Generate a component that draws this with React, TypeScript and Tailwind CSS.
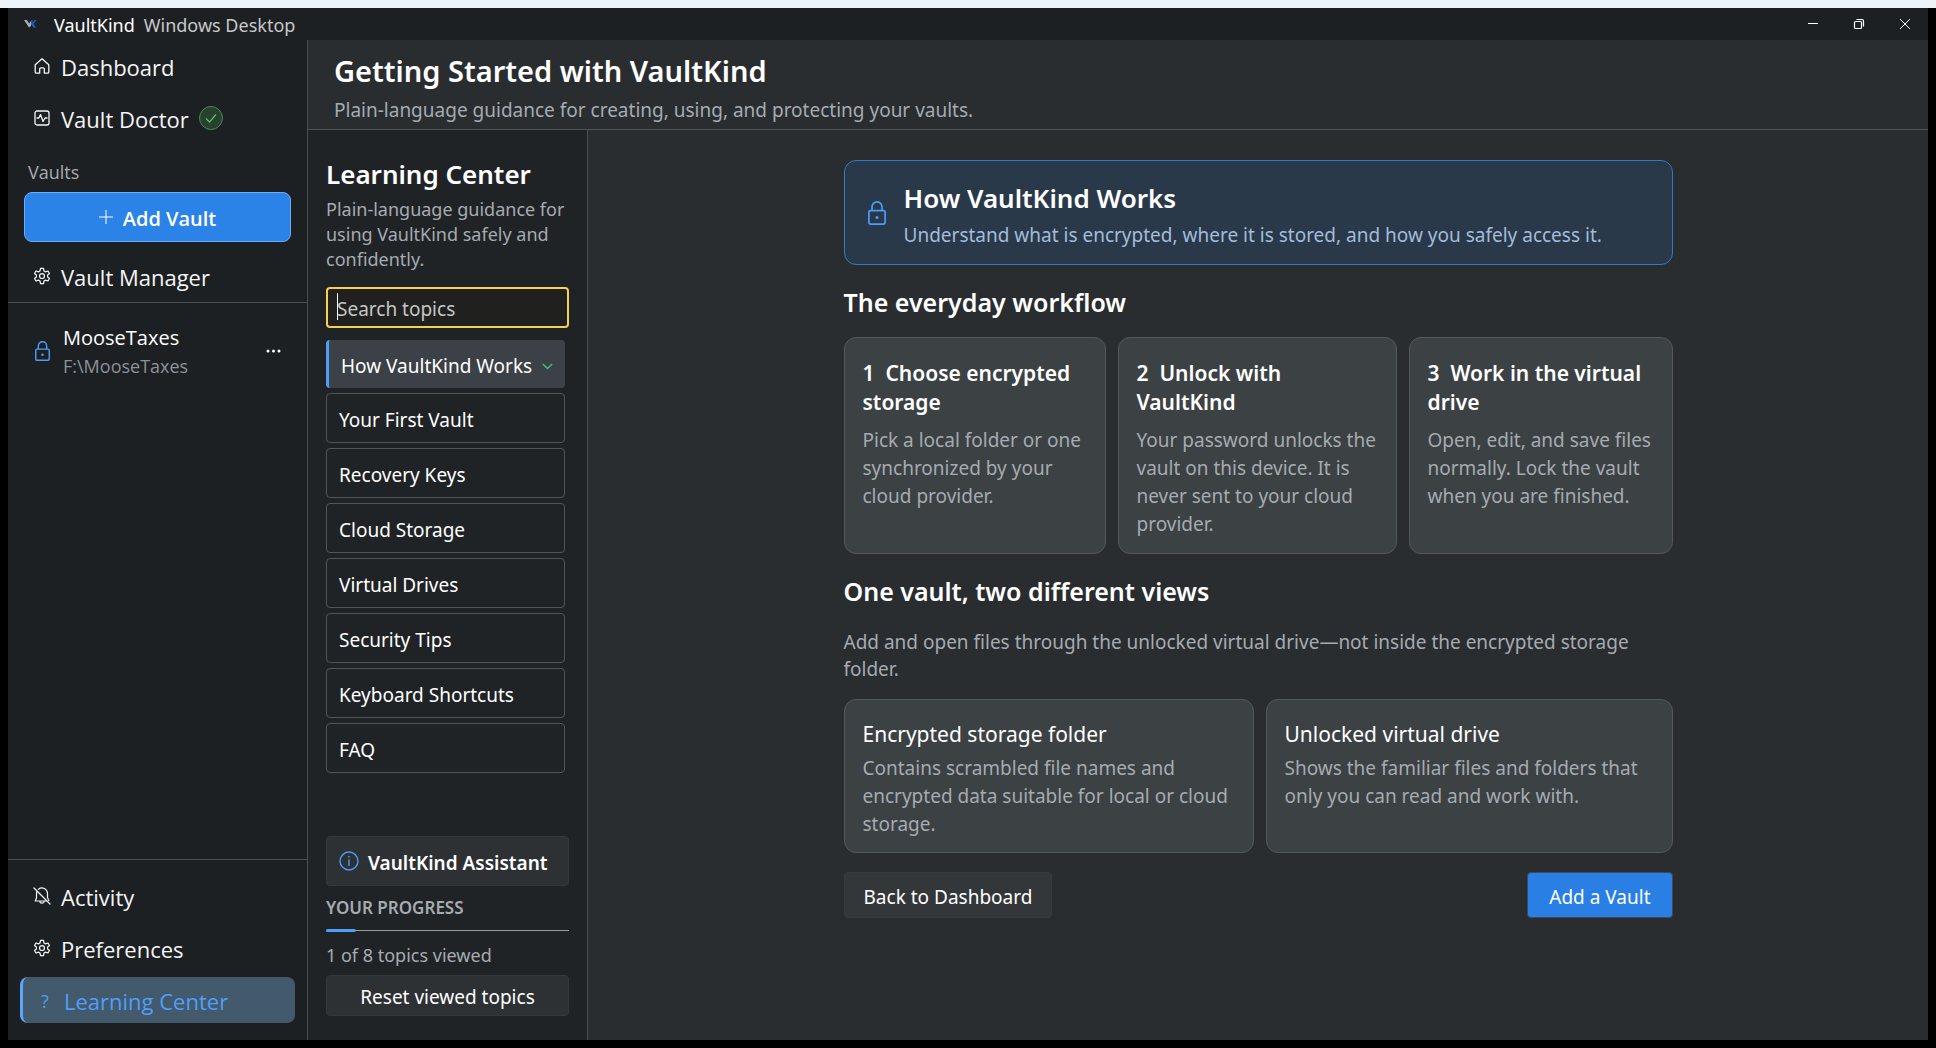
import { useState } from "react";
import { clsx } from "clsx";

const topics = [
    "How VaultKind Works",
    "Your First Vault",
    "Recovery Keys",
    "Cloud Storage",
    "Virtual Drives",
    "Security Tips",
    "Keyboard Shortcuts",
    "FAQ"
];

const steps = [
    {
        title: "Choose encrypted storage",
        text: "Pick a local folder or one synchronized by your cloud provider.",
        size: "basis-[262px]"
    },
    {
        title: "Unlock with VaultKind",
        text: "Your password unlocks the vault on this device. It is never sent to your cloud provider.",
        size: "basis-[279px]"
    },
    {
        title: "Work in the virtual drive",
        text: "Open, edit, and save files normally. Lock the vault when you are finished.",
        size: "basis-[264px]"
    }
];

const views = [
    {
        title: "Encrypted storage folder",
        text: "Contains scrambled file names and encrypted data suitable for local or cloud storage.",
        size: "basis-[410px]"
    },
    {
        title: "Unlocked virtual drive",
        text: "Shows the familiar files and folders that only you can read and work with.",
        size: "basis-[407px]"
    }
];

type IconProps = { className?: string };

function LogoIcon() {
    return (
        <svg className="size-4" viewBox="0 0 16 16" aria-hidden="true">
            <path d="M1 4h3l2 3.500L8 5v5L6 11.500Z" fill="#a9adb2" />
            <path d="M8 4.500 9.500 4v3L11.500 4h2l-3 3.800 2.500 4h-2L8 8.500Z" fill="#1b61c4" />
        </svg>
    );
}

function HomeIcon() {
    return (
        <svg className="size-4" viewBox="0 0 16 16" fill="none" stroke="currentColor" strokeWidth="1.300" strokeLinejoin="round" aria-hidden="true">
            <path d="M1.200 6.800 8 .8l6.800 6V14a1.200 1.200 0 0 1-1.200 1.200H10.300V11a1.200 1.200 0 0 0-1.200-1.200H6.900A1.200 1.200 0 0 0 5.700 11v4.200H2.400A1.200 1.200 0 0 1 1.200 14Z" />
        </svg>
    );
}

function DoctorIcon() {
    return (
        <svg className="size-4" viewBox="0 0 16 16" fill="none" stroke="currentColor" strokeWidth="1.300" strokeLinejoin="round" strokeLinecap="round" aria-hidden="true">
            <rect x="1" y="1" width="14" height="14" rx="2" />
            <path d="M3 8h1.800L6.500 4.500l2.500 7L11 8h2" />
        </svg>
    );
}

function GearIcon() {
    return (
        <svg className="size-[18px]" viewBox="0 0 24 24" fill="none" stroke="currentColor" strokeWidth="1.600" strokeLinejoin="round" aria-hidden="true">
            <path d="M10 1.800h4l.6 3.400 2.200 1.300 3.200-1.200 2 3.400-2.500 2v2.600l2.500 2-2 3.400-3.200-1.200-2.200 1.300-.6 3.400h-4l-.6-3.400-2.200-1.300-3.200 1.200-2-3.400 2.500-2v-2.600l-2.500-2 2-3.400 3.200 1.200 2.200-1.300Z" />
            <circle cx="12" cy="12" r="3.300" />
        </svg>
    );
}

function LockIcon({ className }: IconProps) {
    return (
        <svg className={className} viewBox="0 0 18 24" fill="none" stroke="currentColor" strokeWidth="1.700" aria-hidden="true">
            <rect x=".9" y="9.700" width="16.200" height="13.400" rx="1.500" />
            <path d="M4 9.700V5.900a5 5 0 0 1 10 0v3.800" />
            <circle cx="9" cy="16.400" r="1.500" fill="currentColor" stroke="none" />
        </svg>
    );
}

function BellOffIcon() {
    return (
        <svg className="size-[18px]" viewBox="0 0 18 18" fill="none" stroke="currentColor" strokeWidth="1.200" strokeLinejoin="round" strokeLinecap="round" aria-hidden="true">
            <path d="M1 1l16 16M5.500 2.300A5.500 5.500 0 0 1 14.500 6.500v4l1.300 3M13.500 14H2.200L3.500 11V6.500c0-1 .2-1.700.5-2.400M6.800 14a2.200 2.200 0 0 0 4.400 0" />
        </svg>
    );
}

function NavItem({ icon, label, children }: { icon: React.ReactNode; label: string; children?: React.ReactNode }) {
    return (
        <a href="#" className="flex h-[52px] items-center gap-[10px] pl-[25px] text-[22px] text-[#f4f5f6]">
            <span className="flex w-[18px] shrink-0 items-center justify-center">{icon}</span>
            <span className="pt-[2px]">{label}</span>
            {children}
        </a>
    );
}

function InfoCard({ title, text, size, number }: { title: string; text: string; size: string; number?: number }) {
    return (
        <section
            className={clsx(
                "flex-auto rounded-[12px] border border-[#53585c] bg-[#3c4144] pl-[18px] pr-[16px]",
                number ? "pt-[21px] pb-[15px]" : "pt-[20px] pb-[14px]",
                size
            )}
        >
            <h3 className={clsx("text-[21px] leading-[29px] text-white", number && "font-semibold")}>
                {number ? `${number}\u00a0\u00a0${title}` : title}
            </h3>
            <p className={clsx("text-[19px] leading-[28px] text-[#a5abb1]", number ? "mt-[9px]" : "mt-[5px]")}>{text}</p>
        </section>
    );
}

export default function App() {
    const [active, setActive] = useState(0);
    const [query, setQuery] = useState("");
    const shown = topics.filter(topic => topic.toLowerCase().includes(query.toLowerCase()));

    return (
        <div className="flex min-h-screen flex-col border-x-8 border-b-8 border-black bg-[#1d2023] font-['Segoe_UI','Noto_Sans',sans-serif] text-white">
            <div className="-mx-2 h-2 bg-[#edf3f8]" />

            <header className="flex h-8 items-center px-[15px] text-[18px]">
                <LogoIcon />
                <span className="ml-[15px] pt-[2px]">VaultKind</span>
                <span className="ml-[9px] pt-[2px] text-[#c6c8ca]">Windows Desktop</span>
                <div className="ml-auto flex items-center gap-[30px]">
                    <button type="button" aria-label="Minimize">
                        <svg className="size-4" viewBox="0 0 16 16" stroke="currentColor" aria-hidden="true">
                            <path d="M3 7.500h10" />
                        </svg>
                    </button>
                    <button type="button" aria-label="Restore">
                        <svg className="size-4" viewBox="0 0 16 16" fill="none" stroke="currentColor" strokeWidth="1.200" aria-hidden="true">
                            <rect x="3.500" y="5.500" width="7" height="7" rx="1" />
                            <path d="M5.500 3.500H11a1.500 1.500 0 0 1 1.500 1.500v5.500" />
                        </svg>
                    </button>
                    <button type="button" aria-label="Close">
                        <svg className="size-4" viewBox="0 0 16 16" stroke="currentColor" aria-hidden="true">
                            <path d="m3 3 10 10M13 3 3 13" />
                        </svg>
                    </button>
                </div>
            </header>

            <div className="flex flex-1">
                <nav className="flex w-[300px] shrink-0 flex-col border-r border-[#4a4e51] font-['Segoe_UI','Open_Sans',sans-serif]">
                    <div>
                        <NavItem icon={<HomeIcon />} label="Dashboard" />
                        <NavItem icon={<DoctorIcon />} label="Vault Doctor">
                            <span className="flex size-6 items-center justify-center rounded-full border border-[#3c8f55] bg-[#29402f]">
                                <svg className="size-3" viewBox="0 0 12 12" fill="none" stroke="#4cc26b" strokeWidth="1.200" aria-hidden="true">
                                    <path d="m1 6.500 3.500 3.500L11 2.500" />
                                </svg>
                            </span>
                        </NavItem>
                    </div>
                    <h2 className="mt-[14px] pl-5 text-[18px] leading-[28px] text-[#a5abb1]">Vaults</h2>
                    <button
                        type="button"
                        className="mx-4 mt-[6px] flex h-[50px] items-center justify-center gap-[10px] rounded-[8px] border border-[#6aaef8] bg-[#2b83e8] text-[20px] font-semibold"
                    >
                        <svg className="size-[14px]" viewBox="0 0 14 14" stroke="currentColor" aria-hidden="true">
                            <path d="M7 0v14M0 7h14" />
                        </svg>
                        <span className="pt-1">Add Vault</span>
                    </button>
                    <div className="mt-[8px] border-b border-[#4a4e51]">
                        <NavItem icon={<GearIcon />} label="Vault Manager" />
                    </div>
                    <div className="mt-[20px] flex items-center pl-[27px] pr-[26px]">
                        <LockIcon className="h-[20px] w-[15px] text-[#4c9ef8]" />
                        <div className="ml-[13px]">
                            <div className="text-[20px] leading-[30px]">MooseTaxes</div>
                            <div className="text-[18px] leading-[26px] text-[#8b9298]">F:\MooseTaxes</div>
                        </div>
                        <button type="button" aria-label="Vault actions" className="ml-auto">
                            <svg className="h-4 w-[15px]" viewBox="0 0 15 16" fill="currentColor" aria-hidden="true">
                                <circle cx="2" cy="8" r="1.500" />
                                <circle cx="7.500" cy="8" r="1.500" />
                                <circle cx="13" cy="8" r="1.500" />
                            </svg>
                        </button>
                    </div>

                    <div className="mt-auto border-t border-[#4a4e51] pt-[10px] pb-[17px]">
                        <NavItem icon={<BellOffIcon />} label="Activity" />
                        <NavItem icon={<GearIcon />} label="Preferences" />
                        <a
                            href="#"
                            aria-current="page"
                            className="mx-3 mt-[3px] flex h-[46px] items-center rounded-[8px] border-l-[3px] border-[#5aa6fb] bg-[#43596c] pt-[2px] pl-[18px] text-[22px] text-[#4f9ff8]"
                        >
                            <span className="w-[23px] text-[18px]">?</span>
                            Learning Center
                        </a>
                    </div>
                </nav>

                <div className="flex flex-1 flex-col bg-[#292d30]">
                    <div className="h-[90px] border-b border-[#4f5356] pt-[10px] pl-[26px]">
                        <h1 className="text-[29px] leading-[42px] font-semibold">Getting Started with VaultKind</h1>
                        <p className="mt-[5px] text-[19px] leading-[26px] text-[#a5abb1]">
                            Plain-language guidance for creating, using, and protecting your vaults.
                        </p>
                    </div>

                    <div className="flex flex-1">
                        <aside className="flex w-[280px] shrink-0 flex-col border-r border-[#4a4e51] bg-[#202326] px-[18px] pb-[24px]">
                            <h2 className="mt-[26px] text-[26px] leading-[36px] font-semibold">Learning Center</h2>
                            <p className="mt-[5px] text-[18px] leading-[25px] text-[#a5abb1]">
                                Plain-language guidance for using VaultKind safely and confidently.
                            </p>
                            <div className="relative mt-[15px]">
                                <input
                                    type="text"
                                    aria-label="Search topics"
                                    placeholder="Search topics"
                                    value={query}
                                    onChange={e => setQuery(e.target.value)}
                                    className="block h-[41px] w-full rounded-[4px] border-2 border-[#f5d055] bg-[#20211f] px-[9px] pt-[3px] text-[19px] outline-none placeholder:text-[#c5c6c6]"
                                />
                                {!query && <span className="pointer-events-none absolute top-[6px] left-[11px] h-[27px] w-px bg-white" />}
                            </div>
                            <div className="mt-3 mr-1 flex flex-col gap-[5px]">
                                {shown.map(topic => {
                                    const index = topics.indexOf(topic);
                                    return (
                                        <button
                                            key={topic}
                                            type="button"
                                            onClick={() => setActive(index)}
                                            className={clsx(
                                                "flex items-center rounded-[4px] pt-1 pl-[12px] text-left text-[19px] whitespace-nowrap",
                                                index === active
                                                    ? "h-[48px] border-l-[3px] border-[#4c9ef8] bg-[#3b4147]"
                                                    : "h-[50px] border border-[#50555a]"
                                            )}
                                        >
                                            {topic}
                                            {index === active && (
                                                <svg className="ml-[10px] h-3 w-[11px]" viewBox="0 0 11 12" fill="none" stroke="#3fc36b" strokeWidth="1.500" aria-hidden="true">
                                                    <path d="m.8 4 4.700 4.500L10.200 4" />
                                                </svg>
                                            )}
                                        </button>
                                    );
                                })}
                            </div>
                            <button
                                type="button"
                                className="mt-auto flex h-[50px] items-center rounded-[4px] border border-[#34383b] bg-[#2d3134] pl-[12px] text-[19px] font-semibold whitespace-nowrap"
                            >
                                <svg className="mr-[9px] size-5" viewBox="0 0 20 20" fill="none" stroke="#4c9ef8" strokeWidth="1.400" aria-hidden="true">
                                    <circle cx="10" cy="10" r="9" />
                                    <path d="M10 8.500V15M10 5v1.600" />
                                </svg>
                                <span className="pt-1">VaultKind Assistant</span>
                            </button>
                            <h3 className="mt-[9px] text-[17px] leading-[26px] font-semibold text-[#a5abb1]">YOUR PROGRESS</h3>
                            <div className="mt-[8px] flex h-[3px] items-center bg-[linear-gradient(#9a9da0,#9a9da0)] bg-[length:100%_1px] bg-center bg-no-repeat">
                                <div className="h-[3px] w-1/8 rounded-full bg-[#4c9ef8]" />
                            </div>
                            <p className="mt-[10px] text-[18px] leading-[26px] text-[#a5abb1]">1 of 8 topics viewed</p>
                            <button type="button" className="mt-[7px] h-[41px] rounded-[4px] border border-[#34383b] bg-[#2d3134] pt-[3px] text-[19px]">
                                Reset viewed topics
                            </button>
                        </aside>

                        <main className="flex-1 px-6 pt-[30px]">
                            <div className="mx-auto w-full max-w-[829px]">
                                <section className="flex h-[105px] items-center rounded-[12px] border border-[#3579c6] bg-[#293949] pl-[23px]">
                                    <LockIcon className="h-6 w-[18px] text-[#4c9ef8]" />
                                    <div className="ml-[18px] pt-[3px]">
                                        <h2 className="text-[26px] leading-[38px] font-semibold">How VaultKind Works</h2>
                                        <p className="mt-[3px] text-[19px] leading-[30px] text-[#a3bcd9]">
                                            Understand what is encrypted, where it is stored, and how you safely access it.
                                        </p>
                                    </div>
                                </section>

                                <h2 className="mt-[19px] text-[25px] leading-[36px] font-semibold">The everyday workflow</h2>
                                <div className="mt-[17px] flex gap-3">
                                    {steps.map((step, i) => (
                                        <InfoCard key={step.title} {...step} number={i + 1} />
                                    ))}
                                </div>

                                <h2 className="mt-[19px] text-[25px] leading-[36px] font-semibold">One vault, two different views</h2>
                                <p className="mt-[20px] text-[19px] leading-[27px] text-[#a5abb1]">
                                    Add and open files through the unlocked virtual drive—not inside the encrypted storage folder.
                                </p>
                                <div className="mt-[16px] flex gap-3">
                                    {views.map(view => (
                                        <InfoCard key={view.title} {...view} />
                                    ))}
                                </div>

                                <div className="mt-[19px] flex justify-between">
                                    <button type="button" className="h-[46px] rounded-[4px] border border-[#373b3e] bg-[#33373a] px-[19px] pt-[4px] text-[19px]">
                                        Back to Dashboard
                                    </button>
                                    <button type="button" className="h-[46px] rounded-[4px] border border-[#3b4a5c] bg-[#297fe4] px-[21px] pt-[4px] text-[19px]">
                                        Add a Vault
                                    </button>
                                </div>
                            </div>
                        </main>
                    </div>
                </div>
            </div>
        </div>
    );
}
